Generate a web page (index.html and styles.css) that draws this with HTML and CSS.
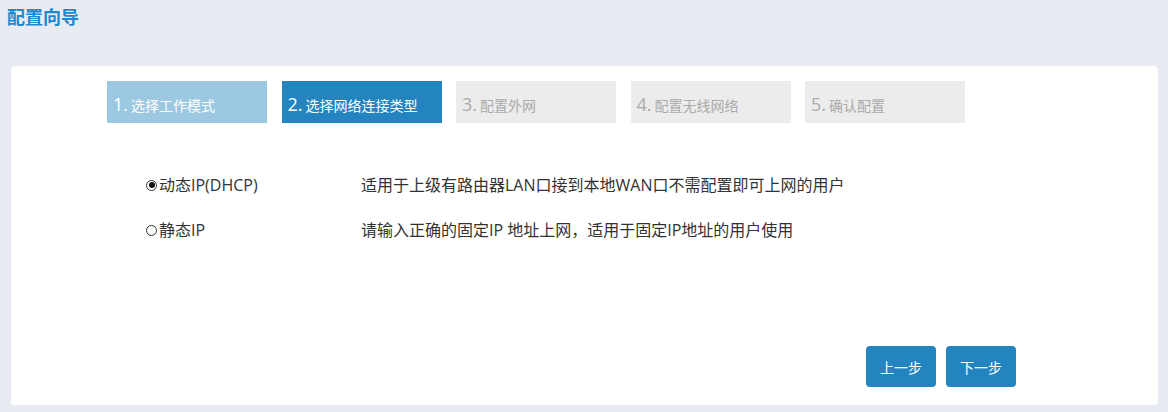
FILE: index.html
```html
<!DOCTYPE html>
<html lang="zh-CN">
<head>
  <meta charset="UTF-8" />
  <title>配置向导</title>
  <link rel="stylesheet" href="styles.css">
</head>
<body>
  <header class="page-title">配置向导</header>

  <div class="wizard">
    <div class="steps">
      <div class="step done"><span class="num">1.</span>选择工作模式</div>
      <div class="step active"><span class="num">2.</span>选择网络连接类型</div>
      <div class="step"><span class="num">3.</span>配置外网</div>
      <div class="step"><span class="num">4.</span>配置无线网络</div>
      <div class="step"><span class="num">5.</span>确认配置</div>
    </div>

    <div class="options">
      <div class="option">
        <label class="choice"><span class="radio checked"></span>动态IP(DHCP)</label>
        <div class="desc">适用于上级有路由器LAN口接到本地WAN口不需配置即可上网的用户</div>
      </div>
      <div class="option">
        <label class="choice"><span class="radio"></span>静态IP</label>
        <div class="desc">请输入正确的固定IP 地址上网，适用于固定IP地址的用户使用</div>
      </div>
    </div>

    <div class="actions">
      <button class="btn">上一步</button>
      <button class="btn">下一步</button>
    </div>
  </div>
</body>
</html>
```

FILE: styles.css
```css
body {
  margin: 0;
  background: #e9ebf3;
  font-family: "Open Sans", "Noto Sans CJK SC", sans-serif;
  color: #333;
}

.page-title {
  height: 66px;
  box-sizing: border-box;
  padding: 5px 7px;
  font-size: 18px;
  font-weight: bold;
  color: #1a89d0;
  line-height: 24px;
}

.wizard {
  margin: 0 10px 0 11px;
  height: 339px;
  box-sizing: border-box;
  background: #fff;
  border-radius: 4px;
  padding: 15px 0 18px 96px;
  display: flex;
  flex-direction: column;
}

.steps {
  display: flex;
  gap: 14.5px;
}

.step {
  width: 160px;
  height: 42px;
  box-sizing: border-box;
  padding: 12px 0 0 6px;
  background: #ececec;
  color: #aaa;
  font-size: 14px;
  line-height: 22px;
  white-space: nowrap;
}

.step .num {
  font-size: 18px;
  margin-right: 3px;
}

.step.done {
  background: #9dc8e1;
  color: #fff;
}

.step.active {
  background: #2384c0;
  color: #fff;
}

.options {
  margin-top: 52px;
  display: flex;
  flex-direction: column;
  gap: 25px;
}

.option {
  display: flex;
  font-size: 16px;
  line-height: 20px;
}

.choice {
  width: 215px;
  padding-left: 39px;
  display: flex;
  align-items: center;
}

.radio {
  width: 11px;
  height: 11px;
  box-sizing: border-box;
  border: 1px solid #333;
  border-radius: 50%;
  margin-right: 2px;
  display: inline-flex;
  align-items: center;
  justify-content: center;
}

.radio.checked::after {
  content: "";
  width: 6px;
  height: 6px;
  border-radius: 50%;
  background: #111;
}

.actions {
  margin-top: auto;
  display: flex;
  justify-content: flex-end;
  gap: 10px;
  padding-right: 142px;
}

.btn {
  width: 70px;
  height: 41px;
  border: none;
  border-radius: 4px;
  background: #2384c0;
  color: #fff;
  font-family: inherit;
  font-size: 14px;
  cursor: pointer;
}
```
